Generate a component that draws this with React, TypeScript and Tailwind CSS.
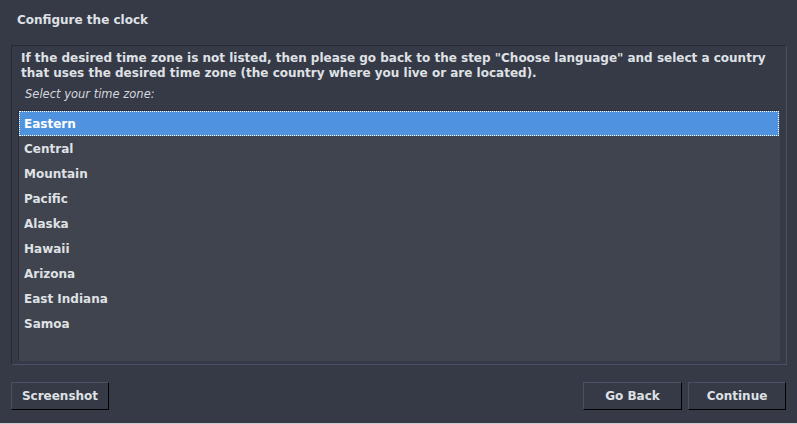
import React from "react";

const zones = ["Eastern", "Central", "Mountain", "Pacific", "Alaska", "Hawaii", "Arizona", "East Indiana", "Samoa"];

const btn =
  "h-[28px] bg-[#363a47] border border-t-[#4a5164] border-l-[#4a5164] border-r-black border-b-black text-[12px] font-bold text-[#dfe1e5] leading-[16px]";

export default function App() {
  return (
    <div
      className="w-[797px] h-[424px] bg-[#363a47] text-[#dfe1e5] flex flex-col overflow-hidden"
      style={{ fontFamily: '"DejaVu Sans", sans-serif' }}
    >
      <div className="h-[45px] pl-[17px] pt-[12px] text-[12px] font-bold leading-[16px]">Configure the clock</div>
      <div className="ml-[11px] mr-[10px] h-[320px] border border-t-[#262933] border-l-[#262933] border-r-[#4a5063] border-b-[#4a5063] flex flex-col px-[6px] pb-[3px]">
        <div className="pt-[5px] pl-[3px] text-[12px] font-bold leading-[15px]">
          If the desired time zone is not listed, then please go back to the step "Choose language" and select a country that uses the desired time zone (the country where you live or are located).
        </div>
        <div className="pl-[7px] pt-[6px] text-[11.5px] italic leading-[14px] text-[#d4d6dc]">Select your time zone:</div>
        <div className="mt-[9px] flex-1 bg-[#40444f] border border-t-[#2b2e38] border-l-[#2b2e38] border-r-[#40444f] border-b-[#40444f] flex flex-col">
          {zones.map((z, i) => (
            <div
              key={z}
              className={
                "h-[25px] pl-[5px] flex items-center text-[12px] font-bold " +
                (i === 0 ? "bg-[#4f93de] text-white outline outline-1 outline-dotted outline-white -outline-offset-1" : "")
              }
            >
              {z}
            </div>
          ))}
        </div>
      </div>
      <div className="flex-1 flex items-start px-[11px] pt-[17px]">
        <button className={btn + " w-[98px]"}>Screenshot</button>
        <div className="flex-1" />
        <button className={btn + " w-[99px]"}>Go Back</button>
        <button className={btn + " ml-[6px] w-[98px]"}>Continue</button>
      </div>
      <div className="h-px bg-[#c9cbd0]" />
    </div>
  );
}
